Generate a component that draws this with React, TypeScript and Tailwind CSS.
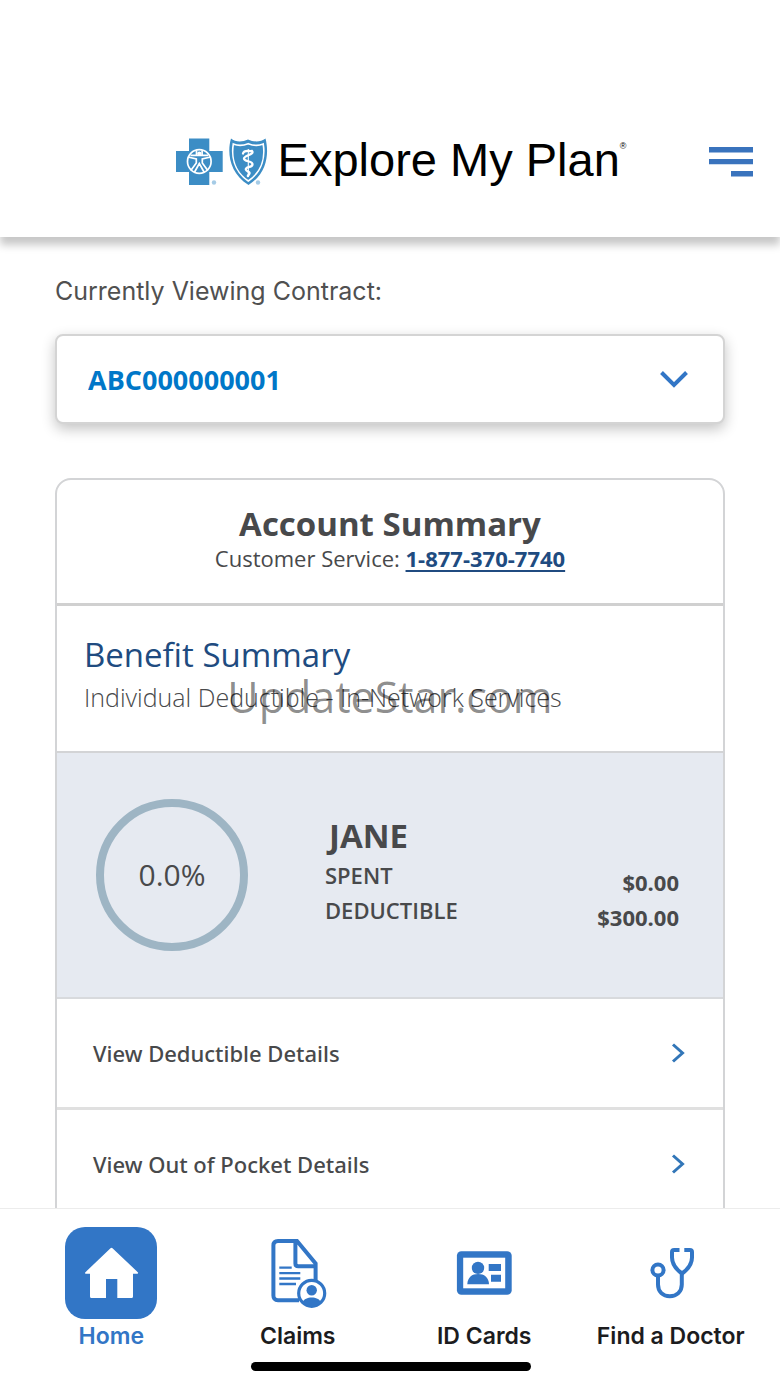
import type { ReactNode } from 'react';

const contracts = ['ABC000000001'];

const amounts = [
  { label: 'SPENT',      value: '$0.00'   },
  { label: 'DEDUCTIBLE', value: '$300.00' },
];

const detailLinks = ['View Deductible Details', 'View Out of Pocket Details'];

function PlanLogo() {
  return (
    <svg className="h-12 w-23 shrink-0" viewBox="0 0 92 48" aria-hidden>
      {/* Cross */}
      <path d="M13 0.5H33.3V13H46.7V34H33.3V47H13V34H0V13H13Z" fill="#3c8dc5" />
      <g fill="none" stroke="#fff" strokeWidth="1.7">
        <circle cx="23.3" cy="23.5" r="11.8" />
        <path d="M12 19L20.3 21V25L14.8 32.5M34.6 19L26.3 21V25L31.8 32.5M18.3 34.5L23.3 25.5L28.3 34.5" />
        <path d="M14.5 17.3H32.1M20.5 12.5V17M26.1 12.5V17" />
      </g>
      <circle cx="23.3" cy="15.6" r="2.1" fill="#fff" />
      <circle cx="38" cy="44.5" r="2.2" fill="#a5cbe6" />

      {/* Shield */}
      <path
        d="M55 0.5C59 4 66 4.5 72 1.5C78 4.5 85 4 89.5 0.5C93 14 92 35 72.5 47C53 35 51 14 55 0.5Z"
        fill="#3c8dc5"
      />
      <path
        d="M57.3 6C62 8 67 7.8 72.2 5.7C77.5 7.8 82.5 8 87.2 6C89 17 87.5 32.5 72.3 43C57 32.5 55.5 17 57.3 6Z"
        fill="none" stroke="#fff" strokeWidth="1.6"
      />
      <path
        d="M67 15.5C68 11.5 73 13.5 76 13C79 16.5 68 17.5 68 20.5C68 24 77 22.5 76.5 26.5C76 30 69.5 28.5 69.8 31.5C70 33.8 74 33 73.5 35.5L71.8 38"
        fill="none" stroke="#fff" strokeWidth="2.3" strokeLinecap="round"
      />
      <path d="M72.3 11V39" stroke="#fff" strokeWidth="1.1" />
      <circle cx="82" cy="44.5" r="2.2" fill="#a5cbe6" />
    </svg>
  );
}

function MenuIcon() {
  return (
    <svg className="h-[30px] w-11" viewBox="0 0 44 30" fill="#3973bd" aria-hidden>
      <path d="M0 0H44V5.4H0ZM0 12H44V17.2H0ZM22 24H44V29.6H22Z" />
    </svg>
  );
}

function HomeIcon() {
  return (
    <svg className="size-23" viewBox="0 0 92 92" aria-hidden>
      <path
        d="M45.5 21.3Q46.5 20.4 47.5 21.3L73 45.4Q73.5 46.5 72.3 46.8H68V69.5Q68 71 66.5 71H52.3V52H41V71H26.5Q25 71 25 69.5V46.8H20.8Q19.5 46.5 20.2 45.4Z"
        fill="#fff"
      />
    </svg>
  );
}

function ClaimsIcon() {
  return (
    <svg className="size-23" viewBox="0 0 92 92" fill="none" stroke="#3276c6" aria-hidden>
      <path
        d="M47 73.2H26Q21.4 73.2 21.4 68.6V18.6Q21.4 14 26 14H45L63.6 36.5V54M43.4 14V36.5Q43.4 39.3 46.2 39.3H63.6"
        strokeWidth="4"
      />
      <path d="M27.3 40.7H39.7M27.3 46.1H48.3M27.3 51.5H48.3M27.3 57H44" strokeWidth="2.3" />
      <circle cx="59.7" cy="66.3" r="13" fill="#fff" strokeWidth="3.2" />
      <circle cx="59.7" cy="63.3" r="5.2" fill="#3276c6" stroke="none" />
      <path d="M50.3 75.5C52 71.8 55.5 70.4 59.7 70.4S67.4 71.8 69.1 75.5Q65 79.5 59.7 79.5T50.3 75.5Z" fill="#3276c6" stroke="none" />
    </svg>
  );
}

function IdCardIcon() {
  return (
    <svg className="size-23" viewBox="0 0 92 92" fill="#3276c6" aria-hidden>
      <rect x="18.9" y="24.3" width="54.8" height="43.4" rx="4.5" />
      <rect x="25.2" y="30.7" width="42" height="30.6" fill="#fff" />
      <circle cx="40" cy="40.9" r="6.2" />
      <path d="M29.3 57.2C29.6 50 34 46.9 40.1 46.9S50.7 50 51 57.2Z" />
      <path d="M50.7 37H63V44H50.7ZM53 47.8H63V54.8H53Z" />
    </svg>
  );
}

function StethoscopeIcon() {
  return (
    <svg className="size-23" viewBox="0 0 92 92" fill="none" stroke="#3276c6" strokeWidth="4" aria-hidden>
      <circle cx="33" cy="43" r="5.6" />
      <path d="M33 49.5V57.5C33 64.8 38 69.2 44.8 69.2S56.8 64.8 56.8 57.5V46" />
      <path d="M54.5 22.9H49.2Q47 22.9 47 25.1V30.5C47 36.5 51 42.2 57 46.5C63 42.2 67 36.5 67 30.5V25.1Q67 22.9 64.8 22.9H59.3" />
    </svg>
  );
}

const tabs: { label: string; icon: ReactNode; active?: boolean }[] = [
  { label: 'Home',          icon: <HomeIcon />, active: true },
  { label: 'Claims',        icon: <ClaimsIcon /> },
  { label: 'ID Cards',      icon: <IdCardIcon /> },
  { label: 'Find a Doctor', icon: <StethoscopeIcon /> },
];

function Header() {
  return (
    <header className="relative z-10 grid grid-cols-[1fr_auto_1fr] items-center bg-white pt-[124px] pr-[27px] pb-[38px] pl-[49px] shadow-[0_8px_8px_rgba(0,0,0,0.22)]">
      <div className="col-start-2 flex h-[75px] items-center gap-2.5">
        <PlanLogo />
        <h1 className="flex items-start pb-1 font-['Liberation_Sans',Arial,sans-serif] text-[47px] leading-[52px] whitespace-nowrap text-black">
          Explore My Plan
          <sup className="top-0 pt-2 text-[9px] leading-[9px]">®</sup>
        </h1>
      </div>
      <button type="button" aria-label="Menu" className="justify-self-end">
        <MenuIcon />
      </button>
    </header>
  );
}

function ContractPicker() {
  return (
    <div>
      <label
        htmlFor="contract"
        className="block font-[Inter,sans-serif] text-[25px] leading-8 text-[#505050]"
      >
        Currently Viewing Contract:
      </label>
      <div className="relative mt-[27px]">
        <select
          id="contract"
          className="block h-[90px] w-full appearance-none rounded-lg border-2 border-[#d4d4d4] bg-white px-[31px] pt-0.5 text-[27px] font-bold text-[#0077c8] shadow-[0_5px_14px_rgba(0,0,0,0.24)]"
        >
          {contracts.map((c) => <option key={c}>{c}</option>)}
        </select>
        <svg
          className="pointer-events-none absolute top-1/2 right-9 h-[18px] w-[30px] -translate-y-1/2"
          viewBox="0 0 30 18" fill="none" stroke="#3276c6" strokeWidth="4" aria-hidden
        >
          <path d="M2.5 2.5L15 15L27.5 2.5" />
        </svg>
      </div>
    </div>
  );
}

function SpendingPanel() {
  return (
    <div className="flex h-[246px] items-center border-b-2 border-[#d8dadd] bg-[#e6eaf1] pr-[44px] pl-[39px]">
      <div className="flex size-38 shrink-0 items-center justify-center rounded-full border-8 border-[#9eb5c4] pb-0.5 text-[30px]">
        0.0%
      </div>
      <div className="ml-[77px] flex-1 pb-2">
        <h3 className="pl-1 text-[33px] leading-[44px] font-bold">JANE</h3>
        <dl className="text-[22px] leading-[35px]">
          {amounts.map((a) => (
            <div key={a.label} className="flex justify-between">
              <dt className="font-semibold">{a.label}</dt>
              <dd className="pt-[7px] -mb-[7px] font-bold">{a.value}</dd>
            </div>
          ))}
        </dl>
      </div>
    </div>
  );
}

function AccountCard() {
  return (
    <section className="relative mt-[54px] rounded-2xl border-2 border-[#d3d4d6]">
      <div className="border-b-3 border-[#d0d0d0] pt-[22px] pb-[33px] text-center">
        <h2 className="text-[33px] leading-[44px] font-bold">Account Summary</h2>
        <p className="text-[22px] leading-6">
          Customer Service:{' '}
          <a href="tel:1-877-370-7740" className="font-bold text-[#204b80] underline decoration-2 underline-offset-3">
            1-877-370-7740
          </a>
        </p>
      </div>

      <div className="h-[147px] border-b-2 border-[#d3d4d6] px-[27px] pt-[27px]">
        <h2 className="text-[33px] leading-[44px] text-[#204b80]">Benefit Summary</h2>
        <p className="text-[25px] leading-10 font-light">Individual Deductible - In-Network Services</p>
      </div>

      <SpendingPanel />

      {detailLinks.map((text) => (
        <a
          key={text}
          href="#"
          className="flex h-[111px] items-center justify-between border-b-3 border-[#e0e0e0] pr-[38px] pl-9 font-['Noto_Sans',sans-serif] text-[22px] font-medium"
        >
          {text}
          <svg className="h-5 w-[14px]" viewBox="0 0 14 20" fill="none" stroke="#3276b8" strokeWidth="3" aria-hidden>
            <path d="M2 1.5L11.5 10L2 18.5" />
          </svg>
        </a>
      ))}
    </section>
  );
}

function TabBar() {
  return (
    <nav className="relative z-10 border-t border-[#ececec] bg-white pt-[18px] pr-4 pb-4 pl-[18px] font-[Inter,sans-serif]">
      <div className="grid grid-cols-4">
        {tabs.map((t) => (
          <a
            key={t.label}
            href="#"
            aria-current={t.active ? 'page' : undefined}
            className={`flex flex-col items-center text-[23px] leading-[34px] font-semibold whitespace-nowrap ${t.active ? 'text-[#3276c6]' : 'text-[#1c1c1e]'}`}
          >
            <span className={t.active ? 'rounded-[20px] bg-[#3276c6]' : ''}>{t.icon}</span>
            {t.label}
          </a>
        ))}
      </div>
      <div className="mx-auto mt-[9px] h-[9px] w-70 rounded-full bg-black" />
    </nav>
  );
}

export default function App() {
  return (
    <div className="relative flex h-screen flex-col overflow-hidden bg-white font-['Open_Sans',sans-serif] text-[#48494b]">
      <Header />
      <main className="min-h-0 flex-1 overflow-hidden px-[55px] pt-[38px]">
        <ContractPicker />
        <AccountCard />
      </main>
      <TabBar />

      {/* Watermark */}
      <div className="pointer-events-none absolute inset-0 z-20 flex items-center justify-center pt-2 text-[43px] text-black/45">
        UpdateStar.com
      </div>
    </div>
  );
}
